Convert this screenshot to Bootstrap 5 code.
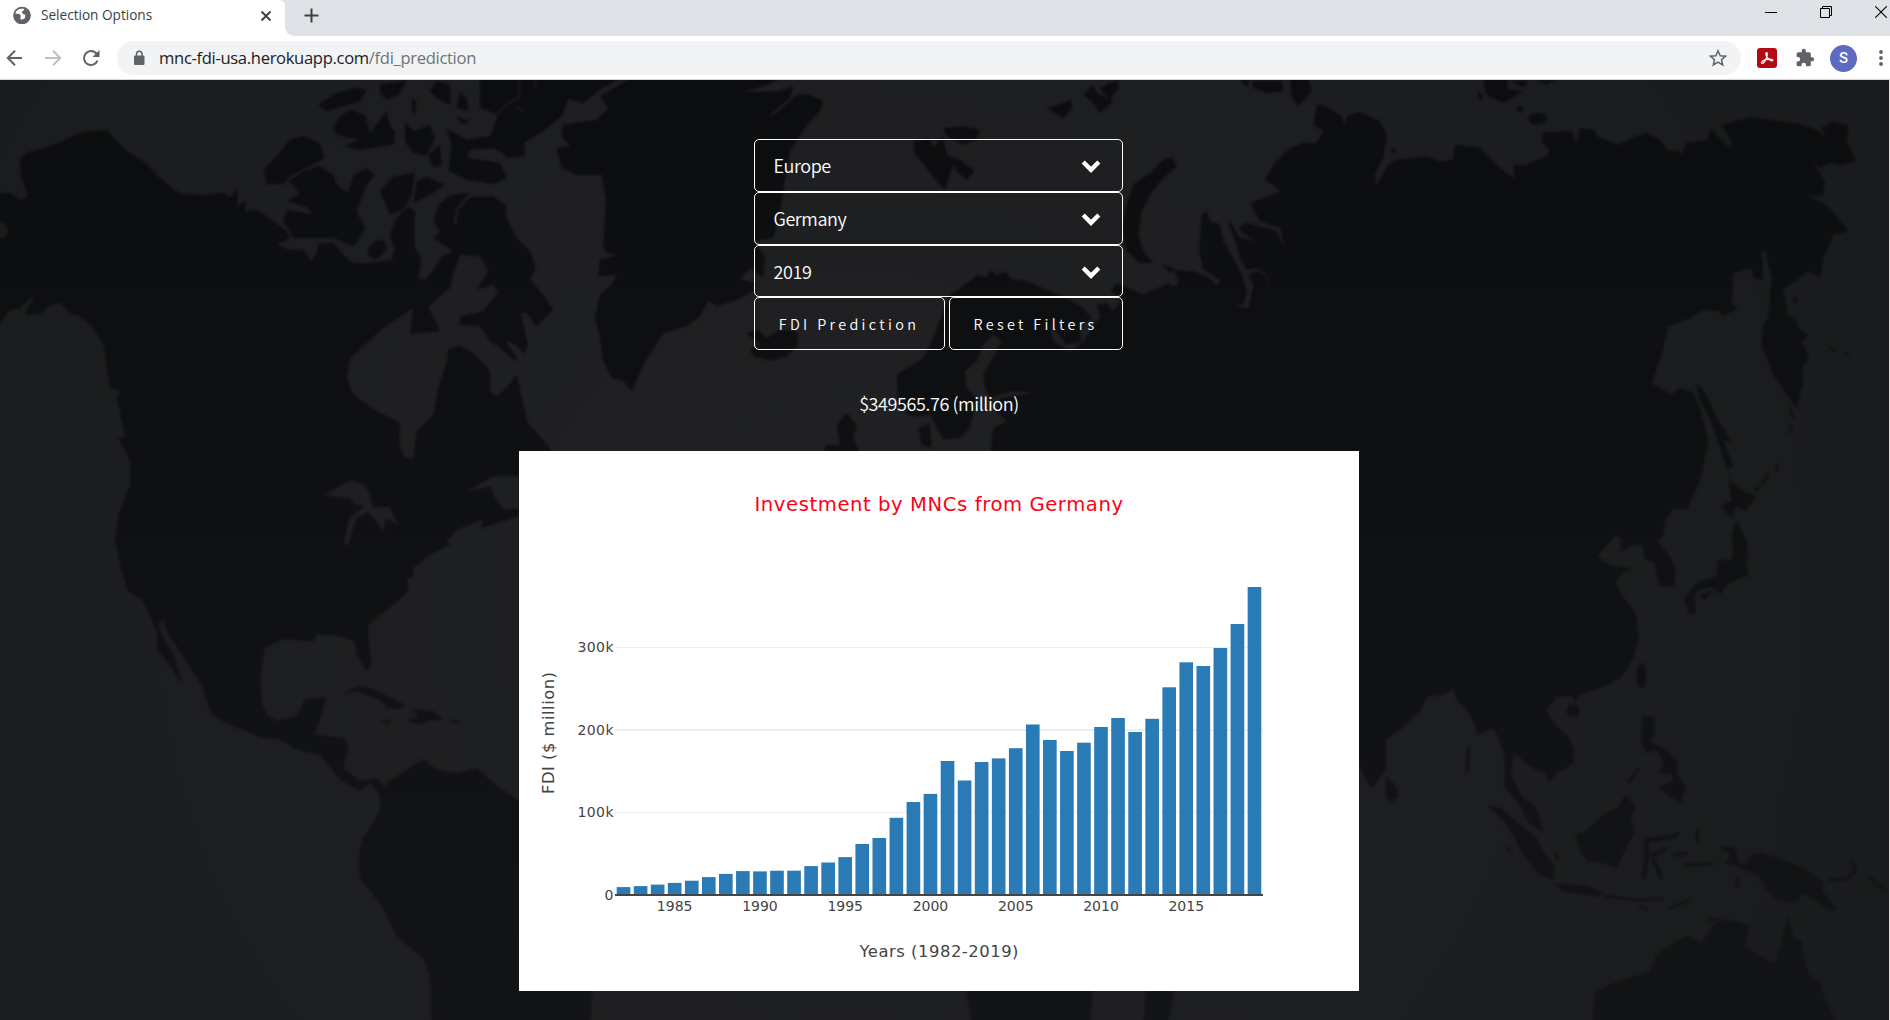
<!DOCTYPE html>
<html lang="en">
<head>
<meta charset="utf-8">
<meta name="viewport" content="width=device-width, initial-scale=1">
<title>Selection Options</title>
<link href="https://cdn.jsdelivr.net/npm/bootstrap@5.3.0/dist/css/bootstrap.min.css" rel="stylesheet">
<script src="https://cdn.jsdelivr.net/npm/bootstrap@5.3.0/dist/js/bootstrap.bundle.min.js"></script>
<style>
  body { width: 1890px; height: 1020px; overflow: hidden; background: #1c1d1f; }
  svg { display: block; flex: none; }
  .chrome-ui { font-family: "Open Sans", "Noto Sans", sans-serif; color: #3c4043; }
  .tab-strip { height: 36px; background: #dee1e6; padding-right: 3px; }
  .tab-active { width: 285px; height: 36px; padding: 0 13px 0 12px; background: #fff; border-top-right-radius: 6px; position: relative; top: 0; }
  .tab-foot { position: absolute; left: 285px; bottom: 0; }
  .tab-title { font-size: 13.6px; letter-spacing: 0; line-height: 20px; margin-left: 9px; margin-top: 5px; height: 21px; }
  .tab-close { margin-top: 10px; }
  .tab-new { margin: 8px 0 0 19px; }
  .win-btns { gap: 43px; height: 24px; }
  .tool-row { height: 44px; background: #fff; border-bottom: 1px solid #d5d7da; padding: 5px 6px 4px 5px; }
  .nav-ico { margin-left: 18px; }
  .omnibox { height: 34px; border-radius: 17px; background: #f1f3f4; margin-left: 16px; padding: 0 14px 0 15px; }
  .url-text { font-size: 16.6px; line-height: 24px; color: #202124; margin-left: 13px; white-space: nowrap; letter-spacing: -.33px; }
  .url-text span { color: #6f7377; }
  .profile-dot { width: 27px; height: 27px; margin-left: 15px; background: #5c6bc0; color: #fff; font: 500 15px/27px Roboto, sans-serif; }
  .page-body { height: 940px; border-right: 1px solid #e4e4e4; font-family: "Noto Sans CJK JP", "Noto Sans CJK SC", "Source Sans Pro", sans-serif; font-weight: 350; color: #fff; position: relative; padding-top: 59px; padding-right: 11px; }
  .world-map { position: absolute; left: 0; top: 0; }
  .filters { width: 369px; position: relative; margin-right: 2px; }
  .pick { height: 52.8px; border: 1px solid #fff; border-radius: 5px; background: transparent; color: #fff; padding: 0 21px 0 19px; font-size: 18px; font-weight: 350; line-height: 26px; letter-spacing: -.42px; }
  .pick svg { position: relative; top: 1px; }
  .act { height: 53px; border: 1px solid #fff; border-radius: 5px; background: transparent; color: #fff; font-size: 14.4px; font-weight: 350; letter-spacing: 3.35px; padding: 0; line-height: 20px; white-space: nowrap; }
  .act-run { width: 191px; }
  .act-reset { width: 174px; }
  .result { position: relative; font-size: 18px; line-height: 28px; margin-top: 39px; letter-spacing: -.4px; }
  .chart-box { position: relative; width: 840px; height: 540px; margin-top: 34px; background: #fff; }
  .chart-box text { font-family: "DejaVu Sans", Verdana, sans-serif; fill: #444; font-weight: 400; }
  .chart-box .tick { font-size: 14px; }
  .chart-box .axis-name { font-size: 16.4px; }
  .chart-box .headline { font-size: 19.6px; fill: #ff0015; }
</style>
</head>
<body>
<header class="chrome-ui">
  <div class="tab-strip d-flex justify-content-between">
    <div class="d-flex">
      <div class="tab-active d-flex align-items-start">
        <svg width="20" height="20" viewBox="0 0 20 20" class="mt-1"><circle cx="10" cy="11.500" r="8.500" fill="#5f6368"/><path d="M3.200 9.200C5 10.800 6 8.600 8 10.500c1.800 1.600-.3 3 .6 4.400 1 1.200 3 .4 4-.6 1.200-1.400 0-2.600 1-3.500-2.500-.3-3.700-1.300-3.500-2.800.2-1.500 2.800-1 2-3.200C8.500 4 4.500 5.600 3.200 9.200z" fill="#fff"/><circle cx="10" cy="11.500" r="8" fill="none" stroke="#5f6368" stroke-width="1.500"/></svg>
        <span class="tab-title flex-grow-1 d-block">Selection Options</span>
        <svg width="12" height="12" viewBox="0 0 12 12" class="tab-close"><path d="M1.500 1.500l9 9M10.500 1.500l-9 9" stroke="#3c4043" stroke-width="1.900"/></svg>
        <svg class="tab-foot" width="9" height="9" viewBox="0 0 9 9"><path d="M0 0A9 9 0 0 0 9 9H0z" fill="#fff"/></svg>
      </div>
      <svg width="15" height="15" viewBox="0 0 15 15" class="tab-new"><path d="M7.500 .5v14M.5 7.500h14" stroke="#3c4043" stroke-width="2"/></svg>
    </div>
    <div class="win-btns d-flex align-items-center">
      <svg width="12" height="12" viewBox="0 0 12 12"><path d="M0 6.500h12" stroke="#000"/></svg>
      <svg width="12" height="12" viewBox="0 0 12 12"><path d="M.5 2.500h9v9h-9zM2.500 2.500v-2h9v9h-2" fill="none" stroke="#000"/></svg>
      <svg width="12" height="12" viewBox="0 0 12 12"><path d="M.2 .2l11.600 11.600M11.800 .2L.2 11.800" stroke="#000" stroke-width="1.100"/></svg>
    </div>
  </div>
  <div class="tool-row d-flex align-items-center">
    <svg width="20" height="20" viewBox="0 0 20 20"><path d="M17 10H3M10 2.800L2.800 10l7.200 7.200" fill="none" stroke="#5f6368" stroke-width="2"/></svg>
    <svg width="20" height="20" viewBox="0 0 20 20" class="nav-ico"><path d="M2 10h14.500M10 2.800l7.200 7.200-7.200 7.200" fill="none" stroke="#bdc1c6" stroke-width="2"/></svg>
    <svg width="20" height="20" viewBox="0 0 20 20" class="nav-ico"><path d="M16.500 12.700a7 7 0 1 1-1.600-7.700l1.300 1.500" fill="none" stroke="#5f6368" stroke-width="2"/><path d="M18.500 2v7h-7z" fill="#5f6368"/></svg>
    <div class="omnibox flex-grow-1 d-flex align-items-center justify-content-between">
      <div class="d-flex align-items-center">
        <svg width="14" height="16" viewBox="0 0 14 16"><rect x="2" y="5.500" width="10.500" height="9.500" rx="1.200" fill="#5f6368"/><path d="M4.500 6V4a2.750 2.750 0 0 1 5.500 0v2" fill="none" stroke="#5f6368" stroke-width="1.500"/></svg>
        <div class="url-text">mnc-fdi-usa.herokuapp.com<span>/fdi_prediction</span></div>
      </div>
      <svg width="18" height="18" viewBox="0 0 18 18"><path d="M9 1.800l2.200 4.900 5.300.5-4 3.500 1.200 5.200L9 13.200l-4.700 2.700 1.200-5.200-4-3.500 5.300-.5z" fill="none" stroke="#5f6368" stroke-width="1.500"/></svg>
    </div>
    <svg width="20" height="20" viewBox="0 0 20 20" style="margin-left:16px"><rect width="20" height="20" rx="3" fill="#b30b12"/><path d="M5 15.200c-1.800-.5 1-2.800 4-3.500 3.500-1 6.500-.8 6.800.3.300 1.500-3 .6-5-1.700C8.700 7.800 8.500 4.800 9.500 4.700c1.200 0 .8 3.600-.5 6.300-1.200 2.700-3 4.600-4 4.200z" fill="none" stroke="#fff" stroke-width="1.300"/></svg>
    <svg width="20" height="20" viewBox="0 0 24 24" class="nav-ico"><path d="M20.500 11H19V7a2 2 0 0 0-2-2h-4V3.500a2.500 2.500 0 0 0-5 0V5H4a2 2 0 0 0-2 2v3.800h1.500a2.700 2.700 0 0 1 0 5.400H2V20a2 2 0 0 0 2 2h3.800v-1.500a2.700 2.700 0 0 1 5.400 0V22H17a2 2 0 0 0 2-2v-4h1.500a2.500 2.500 0 0 0 0-5z" fill="#5f6368"/></svg>
    <div class="profile-dot rounded-circle text-center">S</div>
    <svg width="6" height="18" viewBox="0 0 6 18" style="margin-left:21px"><g fill="#5f6368"><circle cx="3" cy="3" r="1.900"/><circle cx="3" cy="9" r="1.900"/><circle cx="3" cy="15" r="1.900"/></g></svg>
  </div>
</header>

<main class="page-body d-flex flex-column align-items-center">
  <svg class="world-map" width="1889" height="940" viewBox="0 80 1889 940" aria-hidden="true">
    <defs>
      <radialGradient id="seaTone" gradientUnits="userSpaceOnUse" cx="850" cy="600" r="1050"><stop offset="0" stop-color="#212123"/><stop offset=".6" stop-color="#1d1e20"/><stop offset="1" stop-color="#191b1c"/></radialGradient>
      <linearGradient id="landTone" x1="0" y1="0" x2="0" y2="1"><stop offset="0" stop-color="#0c0d0f"/><stop offset="1" stop-color="#131416"/></linearGradient>
      <filter id="soften" filterUnits="userSpaceOnUse" x="-60" y="-60" width="5900" height="3000"><feGaussianBlur stdDeviation="3"/></filter>
      <mask id="land" maskUnits="userSpaceOnUse" x="0" y="70" width="1900" height="960">
        <g transform="translate(0 78) scale(.33333)" fill="#fff" filter="url(#soften)">
          <!-- the Americas -->
          <path d="M-60 345L30 345 60 365 80 360 82 345 62 290 60 245 85 222 130 213 175 195 250 162 320 157 380 220 430 250 480 300 540 348 620 350 670 345 690 357 700 350 712 325 712 385 738 368 735 400 770 395 820 430 860 460 870 480 832 500 870 515 910 515 935 548 952 520 955 497 1000 495 1030 530 1060 555 1100 555 1150 550 1175 545 1183 515 1170 470 1190 420 1225 385 1245 400 1243 470 1245 510 1265 545 1255 600 1275 605 1300 575 1325 535 1360 520 1300 480 1320 460 1300 430 1315 380 1350 352 1410 345 1370 390 1360 440 1368 440 1375 395 1410 358 1480 355 1505 375 1520 420 1550 480 1590 520 1608 570 1590 605 1630 650 1660 695 1610 745 1580 705 1562 705 1583 795 1575 828 1545 800 1515 785 1550 840 1545 850 1500 810 1470 790 1440 745 1380 740 1380 715 1450 700 1495 645 1480 620 1430 635 1465 580 1440 535 1380 530 1360 590 1350 630 1285 685 1320 760 1230 768 1240 690 1150 750 1050 840 1040 900 1060 950 1130 1000 1200 1035 1197 1100 1215 1140 1240 1142 1250 1060 1300 1010 1315 930 1340 850 1345 812 1380 803 1420 825 1470 880 1470 940 1490 955 1520 930 1550 890 1575 1000 1580 1030 1650 1110 1650 1195 1480 1195 1400 1242 1470 1225 1490 1270 1515 1295 1570 1290 1570 1310 1440 1352 1450 1325 1370 1355 1340 1388 1350 1400 1290 1430 1240 1470 1240 1500 1220 1500 1225 1540 1180 1580 1105 1640 1105 1680 1115 1760 1100 1780 1070 1730 1065 1690 1000 1670 950 1670 940 1690 850 1683 795 1710 780 1800 785 1870 800 1910 830 1928 890 1915 915 1865 980 1856 945 1970 1030 1980 1045 2000 1030 2070 1080 2110 1130 2100 1160 2130 1160 2115 1270 2043 1310 2075 1370 2085 1430 2070 1500 2130 1570 2175 1800 2300 1770 2860 1295 2860 1290 2700 1270 2640 1190 2575 1150 2490 1080 2400 1075 2350 1085 2290 1140 2200 1140 2150 1110 2115 1080 2140 1020 2105 960 2030 890 2015 840 1985 780 1977 700 1945 640 1915 620 1870 610 1830 560 1750 505 1670 490 1625 475 1640 480 1660 520 1730 548 1820 500 1750 470 1710 470 1660 430 1570 385 1540 360 1460 345 1386 355 1310 390 1220 390 1150 355 1080 375 1075 350 960 365 940 330 930 310 800 280 750 240 715 210 705 180 675 150 680 125 705 75 710 105 650 60 690 30 695 0 735 -60 760Z"/>
          <g fill="#000"><circle cx="0" cy="458" r="26"/>
          <path d="M970 1250L1030 1215 1060 1205 1095 1220 1110 1245 1120 1285 1170 1285 1197 1340 1160 1325 1150 1368 1125 1325 1100 1305 1070 1325 1045 1405 1030 1395 1045 1320 1090 1285 1060 1280 1050 1262 1010 1260Z"/></g>
          <path d="M792 275L830 235 870 185 910 175 960 195 973 240 930 265 870 295 850 318 800 320ZM865 310L910 280 960 265 1000 290 1010 320 1045 345 1060 290 1100 270 1125 290 1100 320 1070 400 1095 450 1080 480 1060 505 1000 480 950 480 880 480 850 430 860 395 940 408 920 388 862 370 900 345ZM1105 510L1130 485 1155 490 1160 515 1130 545 1105 535ZM1140 340L1180 295 1245 285 1235 350 1210 395 1170 410ZM1240 375L1250 310 1280 298 1335 320 1290 350ZM1000 150L1020 115 1050 95 1095 110 1110 165 1160 100 1170 145 1185 160 1180 200 1080 215 1030 205 1080 185 1010 170ZM955 80L1010 45 1070 28 1100 35 1080 70 1030 85 980 100ZM1215 130L1240 160 1290 140 1305 180 1280 235 1240 225 1215 190ZM1140 20L1220 8 1195 50 1160 65 1140 45ZM1338 150L1400 185 1470 175 1490 130 1510 170 1560 190 1530 240 1480 210 1410 215 1400 240 1500 255 1520 300 1480 318 1400 305 1345 280 1355 200ZM1440 -10L1880 -10 1800 35 1750 75 1705 62 1685 115 1630 160 1572 195 1575 235 1520 240 1490 200 1480 150 1495 110 1440 90ZM1370 90L1380 40 1400 60 1405 100ZM1290 40L1310 10 1350 20 1350 80 1310 60ZM1235 65L1248 65 1245 110 1237 108ZM1285 230L1320 200 1325 260 1300 270ZM1365 115L1410 130 1390 140ZM1500 265L1518 285 1510 305 1480 300ZM1500 370L1520 385 1515 410 1495 405Z"/>
          <path fill="none" stroke="#000" stroke-width="8" d="M1560 0L1555 60 1515 82 1485 115M1545 88L1575 100M1605 6L1610 35"/>
          <path d="M1020 1850L1075 1825 1110 1830 1215 1882 1200 1892 1160 1890 1145 1868 1070 1840ZM1140 1928L1175 1925 1165 1937ZM1215 1925L1255 1920 1235 1893 1300 1900 1330 1925 1280 1930 1265 1940ZM1345 1925L1382 1927 1365 1937Z"/>
          <!-- Greenland -->
          <path d="M1910 -10L1800 55 1825 90 1790 125 1690 140 1685 175 1710 205 1670 210 1685 270 1730 290 1805 290 1818 370 1810 500 1818 524 1855 530 1800 545 1795 595 1850 590 1830 625 1800 650 1785 720 1800 780 1810 850 1835 900 1870 910 1895 940 1930 860 1990 765 2060 745 2100 715 2125 668 2150 685 2220 662 2260 640 2270 615 2220 605 2250 570 2290 600 2295 540 2265 490 2320 480 2340 400 2350 330 2370 220 2400 170 2430 130 2460 100 2470 70 2430 50 2390 50 2330 105 2300 120 2370 60 2380 25 2340 40 2230 42 2290 25 2370 -10Z"/>
          <!-- northern Europe and the Arctic isles -->
          <g transform="translate(2190 0)">
            <path d="M50 765L85 755 110 780 150 755 200 760 205 800 170 835 120 848 70 835 60 815 90 800ZM550 190L600 180 610 210 640 175 650 230 690 245 735 280 710 305 680 280 670 260 645 335 620 310 590 270 555 230ZM640 150L700 145 750 155 740 185 700 200 650 175ZM950 90L1000 75 1025 65 1025 95 1000 120ZM1060 50L1090 20 1100 45 1150 70 1110 105 1085 70ZM1130 15L1170 25 1150 50Z"/>
            <path d="M500 890L580 840 610 780 640 700 660 650 720 610 740 590 770 598 785 575 795 592 830 580 840 600 890 610 960 640 1010 660 1060 690 1085 720 1050 745 1055 790 1010 800 960 740 970 790 1020 820 1060 790 1110 715 1100 680 1130 675 1150 700 1180 660 1140 640 1160 615 1240 650 1320 615 1320 1140 780 1140 790 1050 830 1030 800 1000 810 960 910 945 850 940 780 960 765 930 760 890 815 790 790 770 760 800 740 850 705 880 710 930 740 960 720 1050 690 1080 640 1085 620 1050 600 1010 540 1015 505 980ZM320 1040L350 1005 380 1040 370 1080 395 1140 270 1140 290 1100 330 1100ZM565 1050L600 1035 605 1110 575 1100Z"/>
          </g>
          <!-- Novaya Zemlya and western Siberia -->
          <g transform="translate(3300 0)">
            <path d="M190 245L215 238 230 265 190 300 150 350 125 400 115 470 130 520 160 555 120 555 80 520 65 450 80 380 100 320 150 285ZM185 555L225 575 210 585ZM455 10L545 10 550 40 500 45 460 30ZM570 -10L620 -10 635 40 595 85 575 60ZM420 6H445V30ZM1130 30L1150 60 1140 70ZM1150 -5H1200V70L1170 50ZM870 210L890 215 880 230ZM0 30L60 5 30 70Z"/>
            <path d="M60 655L130 650 200 620 230 625 235 605 220 575 280 580 330 600 355 625 360 605 310 575 297 520 305 410 320 400 330 430 360 440 370 490 400 540 430 600 440 640 430 680 395 680 445 692 460 620 445 590 470 578 495 590 510 628 500 590 470 570 440 575 420 540 410 500 385 440 390 430 420 480 465 490 430 465 415 450 440 435 500 450 530 460 555 515 540 450 480 430 450 375 545 340 495 305 520 260 570 210 610 195 650 195 670 160 640 140 650 80 680 85 700 100 725 115 735 145 740 115 780 102 840 130 860 170 850 240 825 290 830 325 860 265 890 245 980 235 1020 250 1060 245 1065 200 1140 210 1190 260 1215 280V1450H600V1130H60Z"/>
          </g>
          <!-- eastern Siberia, Kamchatka, Japan -->
          <g transform="translate(4440 0)">
            <path d="M0 215L45 265 105 300 100 260 135 262 200 235 210 215 185 190 190 163 275 160 290 195 300 150 345 155 350 175 415 200 460 178 500 165 540 185 560 215 600 220 605 230 620 195 685 185 690 150 750 210 755 190 725 140 810 118 960 138 1010 155 1040 185 1025 150 1060 130 1105 145 1100 190 1130 250 1080 262 1050 255 1020 270 1000 255 1035 310 1030 355 985 350 1050 390 1105 460 1060 470 1030 540 1020 600 985 580 910 635 925 715 945 720 955 750 985 775 965 790 987 840 965 870 970 910 950 990 880 890 845 800 850 740 865 720 875 600 855 515 870 520 845 515 850 607 822 600 815 570 760 585 755 680 775 690 725 715 720 700 670 695 630 720 565 745 545 830 515 915 575 950 600 930 640 945 660 990 685 1090 660 1210 620 1295 580 1290 555 1330 550 1370 530 1395 530 1420 490 1400 450 1402 420 1425 425 1385 410 1370 355 1430H0ZM650 915L680 950 705 1010 755 1092 730 1085 762 1170 745 1165 750 1195 720 1110 690 1020 655 960ZM745 1205L800 1245 830 1255 795 1300 770 1285 755 1320 720 1283 755 1270ZM770 1325L800 1390 805 1440 765 1440 755 1370ZM940 660L955 655 945 680ZM1040 800L1070 815 1060 820ZM1085 820L1110 828 1100 832ZM10 10L80 0 85 35 130 40 70 75 20 50ZM95 8H145L130 30ZM165 6H225L200 20Z"/>
            <ellipse cx="173" cy="122" rx="28" ry="18"/><circle cx="120" cy="93" r="10"/>
            <path d="M930 990L940 1020M932 1040V1065M895 1160L885 1180M865 1190L845 1220M835 1225L825 1240" stroke="#fff" stroke-width="7"/>
          </g>
          <!-- south and east Asia, Australia -->
          <g transform="translate(4050 1386) scale(1.033 1)">
            <path d="M-10 -40H760L720 50 760 78 820 85 790 100 770 130 800 180 830 220 838 290 825 350 790 410 750 435 660 470 655 490 645 468 600 470 570 512 600 560 635 590 650 630 650 670 600 700 575 730 570 700 540 690 475 640 468 710 500 770 540 800 563 878 520 850 490 790 450 740 450 650 430 590 415 565 370 585 360 545 340 510 310 480 300 448 270 465 225 470 205 510 150 565 105 600 103 690 65 745 40 710 0 600ZM780 8L840 -10 890 0 930 50 945 90 942 138 900 140 885 70 855 55 850 12ZM1115 -10L1155 0 1150 70 1157 105 1100 130 1075 162 1050 140 1010 150 1000 175 1005 220 985 225 972 175 1010 125 1065 108 1070 60 1110 60ZM1015 165L1055 150 1030 180ZM850 530L885 530 885 580 870 605 920 630 950 665 950 700 975 740 960 790 930 770 895 745 940 720 930 700 900 700 910 660 890 630 860 640 845 600ZM800 765L830 800 815 830 825 880 800 930 775 985 735 970 690 965 670 940 655 885 690 870 740 820 780 800ZM400 795L440 805 500 860 540 890 565 940 595 980 590 1020 550 1005 500 940 460 860ZM590 1030L690 1038 740 1060 720 1070 620 1055ZM105 710L135 740 140 770 120 788 103 770ZM1070 915L1120 925 1130 970 1150 975 1165 945 1190 940 1230 950 1320 985 1375 1030 1370 1050 1415 1112 1390 1110 1320 1060 1290 1090 1240 1080 1210 1050 1190 1010 1130 982 1090 970 1105 945ZM705 1470L710 1360 760 1330 870 1295 890 1245 930 1215 980 1188 1020 1210 1060 1150 1100 1140 1160 1155 1145 1220 1230 1270 1250 1220 1272 1125 1290 1195 1310 1200 1330 1300 1365 1330 1380 1380 1425 1470Z"/>
            <ellipse cx="846" cy="408" rx="14" ry="38"/><circle cx="648" cy="512" r="19"/>
            <g fill="none" stroke="#fff" stroke-width="13"><path d="M852 1015L862 950 860 900 940 890 957 878M870 950L918 926M880 955L905 1015"/><path stroke-width="9" d="M740 1068L830 1080 910 1078M925 1106L985 1080M840 1098L862 1108M940 945L980 940M970 975L1055 972M1008 870V910M840 685L808 728M1390 1020L1440 1018 1470 990 1455 965M1505 1005L1530 1035 1556 1048M345 620L340 695M1040 1140H1080M1125 1015V1040M460 920L465 940M595 940L605 960"/></g>
          </g>
          <!-- southern Africa and Madagascar -->
          <path d="M2890 2690H3280L3270 2860H2920ZM3440 2690H3530L3500 2860H3430Z"/>
        </g>
      </mask>
    </defs>
    <rect x="0" y="80" width="1889" height="940" fill="url(#seaTone)"/>
    <rect x="0" y="80" width="1889" height="940" fill="url(#landTone)" mask="url(#land)"/>
  </svg>

  <form class="filters d-flex flex-column">
    <button type="button" class="pick d-flex align-items-center justify-content-between">Europe<svg width="20" height="14" viewBox="0 0 20 14"><path d="M2.200 3l7.800 7.800L17.800 3" fill="none" stroke="#fff" stroke-width="4.400"/></svg></button>
    <button type="button" class="pick d-flex align-items-center justify-content-between">Germany<svg width="20" height="14" viewBox="0 0 20 14"><path d="M2.200 3l7.800 7.800L17.800 3" fill="none" stroke="#fff" stroke-width="4.400"/></svg></button>
    <button type="button" class="pick d-flex align-items-center justify-content-between">2019<svg width="20" height="14" viewBox="0 0 20 14"><path d="M2.200 3l7.800 7.800L17.800 3" fill="none" stroke="#fff" stroke-width="4.400"/></svg></button>
    <div class="d-flex justify-content-between">
      <button type="button" class="act act-run">FDI Prediction</button>
      <button type="button" class="act act-reset">Reset Filters</button>
    </div>
  </form>
  <div class="result">$349565.76 (million)</div>

  <section class="chart-box">
    <svg id="fdiChart" width="840" height="540" viewBox="0 0 840 540">
      <g fill="#eee"><rect x="96" y="196" width="648" height="1"/><rect x="96" y="278" width="648" height="2"/><rect x="96" y="361" width="648" height="1"/></g>
      <g id="bars" fill="#2a7ab5"></g>
      <rect x="96" y="443" width="648" height="2" fill="#444"/>
      <text class="headline" x="235.500" y="59.500" textLength="368.500">Investment by MNCs from Germany</text>
      <g><text class="tick" x="58.500" y="201" textLength="36">300k</text><text class="tick" x="58.500" y="284" textLength="36">200k</text><text class="tick" x="58.500" y="366" textLength="36">100k</text><text class="tick" x="85.500" y="449">0</text></g>
      <g id="years" text-anchor="middle"></g>
      <text class="axis-name" x="340.500" y="506" textLength="159">Years (1982-2019)</text>
      <text class="axis-name" transform="translate(35 343) rotate(-90)" textLength="122">FDI ($ million)</text>
    </svg>
  </section>
</main>
<script>
  // bar heights in pixels, one per year from 1982 to 2019
  const heights = [7.900,8.900,10.400,12.100,14.300,17.900,21.100,23.900,23.600,24.300,24.300,28.900,32.500,37.900,51,57,77.200,93,101.100,134,114.500,133,136.600,146.800,170.500,155,144,152.300,168,177,163,176.200,207.700,232.700,229,247,271,308];
  const NS = 'http://www.w3.org/2000/svg', step = 648 / 38;
  heights.forEach((h, i) => {
    const r = document.createElementNS(NS, 'rect');
    r.setAttribute('x', (96 + step * (i + .1)).toFixed(2));
    r.setAttribute('y', 444 - h);
    r.setAttribute('width', (step * .8).toFixed(2));
    r.setAttribute('height', h);
    document.getElementById('bars').appendChild(r);
    if ((1982 + i) % 5 === 0) {
      const t = document.createElementNS(NS, 'text');
      t.setAttribute('class', 'tick');
      t.setAttribute('x', (96 + step * (i + .5)).toFixed(2));
      t.setAttribute('y', 460);
      t.textContent = 1982 + i;
      document.getElementById('years').appendChild(t);
    }
  });
</script>
</body>
</html>
